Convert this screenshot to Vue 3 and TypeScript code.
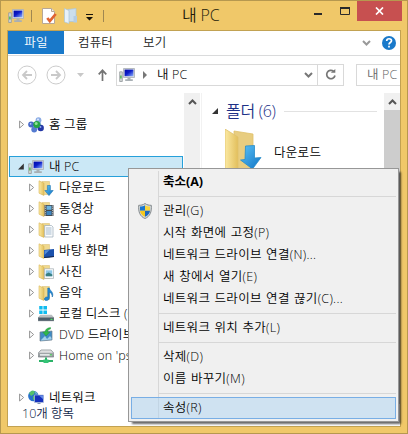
<script setup lang="ts">
interface TreeItem {
  label: string
  icon: string
  level: number
  open?: boolean
  gapAfter?: boolean
}

interface MenuEntry {
  label: string
  bold?: boolean
  shield?: boolean
  active?: boolean
}

const tree: TreeItem[] = [
  { label: '홈 그룹', icon: 'homegroup', level: 0, gapAfter: true },
  { label: '내 PC', icon: 'pc', level: 0, open: true },
  { label: '다운로드', icon: 'download', level: 1 },
  { label: '동영상', icon: 'video', level: 1 },
  { label: '문서', icon: 'document', level: 1 },
  { label: '바탕 화면', icon: 'desktop', level: 1 },
  { label: '사진', icon: 'picture', level: 1 },
  { label: '음악', icon: 'music', level: 1 },
  { label: '로컬 디스크 (C:)', icon: 'disk', level: 1 },
  { label: 'DVD 드라이브 (D:)', icon: 'dvd', level: 1 },
  { label: "Home on 'psf'", icon: 'netdrive', level: 1, gapAfter: true },
  { label: '네트워크', icon: 'network', level: 0 },
]

const menu: MenuEntry[][] = [
  [{ label: '축소(A)', bold: true }],
  [
    { label: '관리(G)', shield: true },
    { label: '시작 화면에 고정(P)' },
    { label: '네트워크 드라이브 연결(N)...' },
    { label: '새 창에서 열기(E)' },
    { label: '네트워크 드라이브 연결 끊기(C)...' },
  ],
  [{ label: '네트워크 위치 추가(L)' }],
  [{ label: '삭제(D)' }, { label: '이름 바꾸기(M)' }],
  [{ label: '속성(R)', active: true }],
]
</script>

<template>
  <div class="window">
    <svg class="defs" width="0" height="0">
      <defs>
        <linearGradient id="screen" x1="0" y1="0" x2="1" y2="1">
          <stop offset="0" stop-color="#0008a8" /><stop offset=".45" stop-color="#0c1cc8" /><stop offset="1" stop-color="#8fb4ff" />
        </linearGradient>
        <linearGradient id="gold" x1="0" y1="0" x2="1" y2="0">
          <stop offset="0" stop-color="#fbe9a2" /><stop offset="1" stop-color="#e2bf5c" />
        </linearGradient>
        <linearGradient id="blue" x1="0" y1="0" x2="1" y2="1">
          <stop offset="0" stop-color="#5cc4f8" /><stop offset="1" stop-color="#0f72c4" />
        </linearGradient>
        <linearGradient id="metal" x1="0" y1="0" x2="0" y2="1">
          <stop offset="0" stop-color="#f4f4f4" /><stop offset="1" stop-color="#8c9296" />
        </linearGradient>
        <symbol id="folder" viewBox="0 0 16 16">
          <path d="M4 1.500h7.500v13H4z" fill="#f0d98e" stroke="#dcc27a" stroke-width=".6" />
          <path d="M1 .8l5 2.400v12.300L1 13.200z" fill="url(#gold)" stroke="#d9b75a" stroke-width=".6" />
        </symbol>
        <symbol id="pc" viewBox="0 0 16 16">
          <path d="M.7 4.800h2.600v9.700H.7z" fill="#d5d8d8" stroke="#92989a" stroke-width=".8" />
          <path d="M1.200 8.500h1.400v3H1.200z" fill="#45b84c" />
          <path d="M4.500 1.500h11v9h-11z" fill="#d9dde0" stroke="#a8afb5" stroke-width=".8" />
          <path d="M5.600 2.600h8.800v6.600H5.600z" fill="url(#screen)" />
          <path d="M8.500 10.800h3v1.500h2.300v1.600H6.200v-1.600h2.300z" fill="#a8afb4" />
        </symbol>
        <symbol id="homegroup" viewBox="0 0 16 16">
          <path d="M4 8L11 4l2 7z" fill="#8fb0e6" stroke="#8fb0e6" stroke-width="2.200" />
          <circle cx="10.500" cy="3.200" r="2.900" fill="#8aabe4" /><circle cx="3.200" cy="7.500" r="3" fill="#4568c8" />
          <circle cx="12.700" cy="11" r="3.200" fill="#2438a6" /><circle cx="6.200" cy="12.500" r="2.900" fill="#557bd0" />
          <circle cx="8.800" cy="7.600" r="3.500" fill="#25a543" /><circle cx="8.200" cy="6.500" r="1.500" fill="#8fe295" />
          <circle cx="10" cy="2.400" r="1" fill="#dbe9ff" /><circle cx="2.600" cy="6.800" r=".9" fill="#c1d4ff" /><circle cx="12.500" cy="10" r=".9" fill="#91a5f0" />
        </symbol>
        <symbol id="download" viewBox="0 0 16 16">
          <use href="#folder" />
          <path d="M9.400 5.500h3v5h2.800L11 15.600 6.800 10.500h2.600z" fill="url(#blue)" stroke="#2075b3" stroke-width=".6" />
        </symbol>
        <symbol id="video" viewBox="0 0 16 16">
          <use href="#folder" />
          <path d="M6.500 4h9v11h-9z" fill="#444b52" /><path d="M8.500 4.800h5v4h-5z" fill="#6ab3df" /><path d="M8.500 10h5v4h-5z" fill="#3f86c1" />
          <path d="M7.400 4.500v10M14.600 4.500v10" stroke="#dce2e5" stroke-width=".8" stroke-dasharray="1.2 1" />
        </symbol>
        <symbol id="document" viewBox="0 0 16 16">
          <use href="#folder" />
          <path d="M6.700 3.500h6.800L15 5v10H6.700z" fill="#fbfcfd" stroke="#9aaab8" stroke-width=".7" />
          <path d="M8 6h5.500M8 8h5.500M8 10h5.500M8 12h5.500" stroke="#8faac2" stroke-width=".8" />
        </symbol>
        <symbol id="desktop" viewBox="0 0 16 16">
          <use href="#folder" />
          <path d="M6 7l10-1v8l-10 1z" fill="#1b51ac" /><path d="M6.500 7.500l5-.5-5 5z" fill="#538bd8" /><path d="M6 14l10-1v1l-10 1z" fill="#17284e" />
        </symbol>
        <symbol id="picture" viewBox="0 0 16 16">
          <use href="#folder" />
          <path d="M6.400 4.800h9.200v9.600H6.400z" fill="#fff" stroke="#9da7ad" stroke-width=".7" />
          <path d="M7.700 6.300h6.600v6H7.700z" fill="#8dc7e8" /><path d="M7.700 10l3-1.400 3.600 1.800v1.900H7.700z" fill="#397f83" />
        </symbol>
        <symbol id="music" viewBox="0 0 16 16">
          <use href="#folder" />
          <path d="M9.800 3h1.500c.2 2.500 5 4 3 9 0-3-1.600-4.500-3-4.800V13c-.3 3-4.600 3.200-4.800 1.200-.2-1.700 1.800-2.600 3.300-2z" fill="#2389d5" stroke="#1769a9" stroke-width=".6" />
        </symbol>
        <symbol id="drive" viewBox="0 0 16 7">
          <path d="M2.500 0h11L16 3v3.500H0V3z" fill="#b9bec1" /><path d="M0 3h16v3.500H0z" fill="#4d5d6b" stroke="#8b9397" stroke-width=".7" />
          <path d="M12.500 4.200h2v1.300h-2z" fill="#52e264" />
        </symbol>
        <symbol id="disk" viewBox="0 0 16 16">
          <path d="M1.200 0h3.400v3.600H1.200zM5.400 0H9v3.600H5.400zM1.200 4.400h3.400V8H1.200zM5.400 4.400H9V8H5.400z" fill="#10bbef" />
          <use href="#drive" x="0" y="8.500" width="16" height="7" />
        </symbol>
        <symbol id="dvd" viewBox="0 0 16 16">
          <path d="M2 5l12-1v9L2 14z" fill="#3f8bc4" stroke="#73818c" stroke-width=".7" />
          <path d="M3 13l4-4 2 3 3-3 1.500 2v1.500L3 13.600z" fill="#a2d1eb" />
          <path d="M12.500.5C9 .8 7.200 2.500 7 5H4.700L8 9l3.800-4H9.500c.1-1.500 1-2.700 3-3z" fill="#31b84a" stroke="#188d38" stroke-width=".4" />
        </symbol>
        <symbol id="netdrive" viewBox="0 0 16 16">
          <path d="M3 2h10l2.700 3v4H.3V5z" fill="url(#metal)" stroke="#777e82" stroke-width=".7" /><path d="M1.500 5.500h13v2.700h-13z" fill="#e2e6e7" stroke="#7d8588" stroke-width=".6" />
          <path d="M11.700 6.200H14v1.300h-2.300z" fill="#42bd50" /><path d="M7 9.500h2V12h6v2H1v-2h6z" fill="#2bb268" /><path d="M5.500 11.500h5V15h-5z" fill="#35c477" />
        </symbol>
        <symbol id="network" viewBox="0 0 16 16">
          <circle cx="5.300" cy="6" r="5.200" fill="#2872cc" /><path d="M1 3l3-2.500 3 .7-1 3L3 6zM5 6l4 .5-2 4-2-1z" fill="#54c16c" /><path d="M7 2l2 1-1 1z" fill="#bdf2c7" />
          <path d="M6.500 5h9v7.500h-9z" fill="#1530bc" stroke="#b2c1d8" stroke-width=".7" /><path d="M11 5.400h4.200v3.800z" fill="#678de8" /><path d="M9.500 13h3v1.200h1.800v1H7.700v-1h1.800z" fill="#8095b4" />
        </symbol>
      </defs>
    </svg>

    <header class="titlebar">
      <div class="quick">
        <svg class="i16" viewBox="0 0 16 16"><use href="#pc" /></svg>
        <i class="tick"></i>
        <svg class="q-doc" width="16" height="16" viewBox="0 0 16 16">
          <path d="M.5.500h9l3 3v12H.5z" fill="#fff" stroke="#b6a796" /><path d="M9.500.500v3h3" fill="#eee" stroke="#b6a796" />
          <path d="M5.300 10l2.500 3.200L13.700 6" fill="none" stroke="#e06432" stroke-width="2.700" />
        </svg>
        <svg class="q-folder" width="14" height="16" viewBox="0 0 14 16">
          <path d="M4 1.500l8-1v13H4z" fill="#cbdeed" stroke="#a9c5db" stroke-width=".7" /><path d="M.5.500L5 2.500v13L.5 14z" fill="#e7f1f9" stroke="#a9c5db" stroke-width=".7" /><path d="M9.500 8H13v6.500H9.500z" fill="#b4cce2" />
        </svg>
        <svg class="q-drop" width="8" height="7" viewBox="0 0 8 7"><path d="M0 0h7v1H0zM0 3h7L3.500 6.500z" fill="#15120a" /></svg>
        <i class="tick"></i>
      </div>
      <h1 class="title">내 PC</h1>
      <div class="controls">
        <svg width="44" height="20" viewBox="0 0 44 20"><path d="M4 13h8" stroke="#2a2a2a" stroke-width="2" /><path d="M30.500 6.500h9v7h-9z" fill="none" stroke="#2a2a2a" /><path d="M30 7h10" stroke="#2a2a2a" stroke-width="2" /></svg>
        <button class="close"><svg width="9" height="8" viewBox="0 0 9 8"><path d="M1 .5l7 7M8 .5l-7 7" stroke="#fff" stroke-width="1.700" /></svg></button>
      </div>
    </header>

    <main class="client">
      <nav class="ribbon">
        <span class="tab file">파일</span>
        <span class="tab computer">컴퓨터</span>
        <span class="tab view">보기</span>
        <svg class="expand" width="9" height="6" viewBox="0 0 9 6"><path d="M1 1l3.500 3.500L8 1" fill="none" stroke="#999" stroke-width="2" /></svg>
        <svg width="14" height="14" viewBox="0 0 14 14"><circle cx="7" cy="7" r="7" fill="#1979ca" /><path d="M4.700 5c0-3 4.800-2.900 4.800-.3C9.500 6.500 7 6.500 7 8.500M7 9.800v1.800" fill="none" stroke="#fff" stroke-width="1.700" /></svg>
      </nav>

      <div class="addressrow">
        <svg class="nav" width="20" height="20" viewBox="0 0 20 20"><circle cx="10" cy="10" r="9" fill="none" stroke="#ccc" /><path d="M15 10H6M10 6l-4 4 4 4" fill="none" stroke="#c9c9c9" stroke-width="1.800" /></svg>
        <svg class="nav" width="20" height="20" viewBox="0 0 20 20"><circle cx="10" cy="10" r="9" fill="none" stroke="#ccc" /><path d="M5 10h9M10 6l4 4-4 4" fill="none" stroke="#c9c9c9" stroke-width="1.800" /></svg>
        <svg class="recent" width="7" height="4" viewBox="0 0 7 4"><path d="M0 0h7L3.500 4z" fill="#c8c8c8" /></svg>
        <svg class="up" width="9" height="12" viewBox="0 0 9 12"><path d="M4.500 12V1.500M.7 5.300l3.800-4 3.800 4" fill="none" stroke="#737373" stroke-width="1.700" /></svg>
        <div class="address">
          <svg class="i16" viewBox="0 0 16 16"><use href="#pc" /></svg>
          <svg class="crumb" width="4" height="8" viewBox="0 0 4 8"><path d="M0 0l4 4-4 4z" fill="#777" /></svg>
          <span class="path">내 PC</span>
          <svg class="chev" width="9" height="6" viewBox="0 0 9 6"><path d="M1 1l3.500 3.500L8 1" fill="none" stroke="#777" stroke-width="2" /></svg>
          <span class="refresh"><svg width="12" height="12" viewBox="0 0 12 12"><path d="M8.500 2.200A4.200 4.200 0 1 0 10 6.500" fill="none" stroke="#777" stroke-width="1.700" /><path d="M5.800 3.800h4.500V0z" fill="#777" /></svg></span>
        </div>
        <div class="search">내 PC</div>
      </div>

      <div class="body">
        <aside class="tree">
          <div v-for="item in tree" :key="item.label" class="row" :class="{ child: item.level, selected: item.open, spaced: item.gapAfter }">
            <svg v-if="item.open" class="arrow" width="6" height="9" viewBox="0 0 6 9"><path d="M5.800 1.500v6H0z" fill="#333" /></svg>
            <svg v-else class="arrow" width="6" height="9" viewBox="0 0 6 9"><path d="M.6 1l4 3.500-4 3.500z" fill="#fff" stroke="#949494" /></svg>
            <svg class="i16" viewBox="0 0 16 16"><use :href="'#' + item.icon" /></svg>
            <span class="label">{{ item.label }}</span>
          </div>
        </aside>
        <div class="scroll"><svg width="9" height="6" viewBox="0 0 9 6"><path d="M1 5l3.500-3.500L8 5" fill="none" stroke="#555" stroke-width="2" /></svg></div>
        <section class="content">
          <div class="group">
            <svg width="6" height="6" viewBox="0 0 6 6"><path d="M6 0v6H0z" fill="#333" /></svg>
            <h2>폴더 (6)</h2><hr />
          </div>
          <div class="tile">
            <svg width="40" height="48" viewBox="0 0 40 48">
              <path d="M9 2l19 3v40H9z" fill="#e8cd80" stroke="#e0c069" stroke-width=".8" />
              <path d="M0 0l13 8v40L0 41z" fill="url(#gold)" stroke="#dfc16d" stroke-width=".8" />
              <path d="M20.500 17l9-.5v12.500l6.500-.5L27.500 40 15.500 31l4.500-.5z" fill="url(#blue)" stroke="#268bc9" stroke-width=".8" />
            </svg>
            <span>다운로드</span>
          </div>
        </section>
        <div class="scroll"><svg width="9" height="6" viewBox="0 0 9 6"><path d="M1 5l3.500-3.500L8 5" fill="none" stroke="#555" stroke-width="2" /></svg><i class="thumb"></i></div>
      </div>
      <footer class="status">10개 항목</footer>
    </main>

    <div class="menu">
      <div v-for="(group, g) in menu" :key="g" class="section">
        <div v-for="entry in group" :key="entry.label" class="entry" :class="{ bold: entry.bold, active: entry.active }">
          <span class="gutter">
            <svg v-if="entry.shield" width="14" height="16" viewBox="0 0 14 16">
              <path d="M7 .5c2 1.500 4 1.800 6.300 1.800C13.800 9 12 13.500 7 15.500 2 13.500.2 9 .7 2.300 3 2.300 5 2 7 .5z" fill="#d4d9db" stroke="#858b8e" />
              <path d="M7 2.200v5.600H2V3.600C4 3.600 5.500 3.200 7 2.200z" fill="#1976cf" /><path d="M7 2.200v5.600h5V3.600C10 3.600 8.500 3.200 7 2.200z" fill="#f9d53d" />
              <path d="M7 7.800v6C4 12.500 2.300 10.500 2 7.800z" fill="#f5c81e" /><path d="M7 7.800v6c3-1.300 4.700-3.300 5-6z" fill="#1b68bf" />
            </svg>
          </span>
          <span>{{ entry.label }}</span>
        </div>
      </div>
    </div>
  </div>
</template>

<style>
body { margin: 0; overflow: hidden; }
</style>

<style scoped>
* { box-sizing: border-box; }
.window { position: relative; width: 408px; height: 434px; padding: 0 6px 6px; border: 1px solid #b6984f; background: #f0c869; font: 350 12.500px/20px "Open Sans", "Noto Sans CJK KR", sans-serif; color: #000; white-space: nowrap; letter-spacing: .15px; }
.defs { position: absolute; }
svg { display: block; flex: none; }
.i16 { width: 16px; height: 16px; }
.titlebar { display: flex; height: 29px; margin-right: -1px; }
.quick { display: flex; align-items: center; width: 175px; padding-left: 1px; }
.tick { width: 1px; height: 12px; margin-left: 7px; background: #a08751; }
.q-doc { margin-left: 10px; }
.q-folder { margin-left: 6px; }
.q-drop { margin: 4px 0 0 8px; }
.q-drop + .tick { margin-left: 9px; }
.title { flex: 1; margin: 0; font-size: 16px; font-weight: 350; line-height: 29px; color: #241c0b; letter-spacing: -.2px; }
.controls { display: flex; }
.controls > svg { margin-right: 3px; }
.close { display: grid; place-items: center; width: 45px; height: 20px; padding: 0; border: 0; background: #c75050; }
.client { height: 397px; border: 1px solid #c2a252; background: #fff; overflow: hidden; }
.ribbon { display: flex; align-items: center; height: 25px; padding-right: 4px; border-bottom: 1px solid #dadbdc; color: #222; line-height: 23px; }
.tab { height: 23px; margin-bottom: 1px; }
.file { width: 56px; text-align: center; background: #1979ca; color: #fff; }
.computer { width: 79px; padding-left: 14px; }
.view { flex: 1; }
.expand { margin-right: 11px; }
.addressrow { display: flex; align-items: center; height: 37px; padding-left: 9px; }
.nav { margin-right: 9px; }
.recent { margin-left: 2px; }
.up { margin: 0 8px 0 14px; }
.address { display: flex; align-items: center; width: 228px; height: 22px; padding-left: 2px; margin-left: 1px; border: 1px solid #d9d9d9; }
.crumb { margin: 0 10px 0 8px; }
.path { flex: 1; }
.chev { margin-right: 4px; }
.refresh { display: grid; place-items: center; width: 26px; height: 20px; border-left: 1px solid #d9d9d9; }
.search { flex: 1; height: 22px; margin-left: 12px; padding-left: 10px; border: 1px solid #d9d9d9; border-right: 0; color: #666; }
.body { display: flex; height: 311px; }
.tree { width: 176px; padding: 21px 1px 0; overflow: hidden; }
.row { display: flex; align-items: center; height: 21px; padding-left: 10px; border: 1px solid transparent; border-left: 0; }
.row.spaced { margin-bottom: 21px; }
.row.child { padding-left: 20px; }
.row.selected { padding-left: 8px; border: 1px solid #26a0da; background: #cbe8f6; }
.row .arrow { margin-right: 3px; }
.row.selected .arrow { margin-right: 4px; }
.label { margin-left: 5px; }
.scroll { display: flex; flex-direction: column; align-items: center; width: 16px; padding-top: 6px; background: #f0f0f0; }
.content { width: 183px; padding: 10px 7px 0 10px; border-left: 1px solid #f2f2f2; margin-left: 1px; }
.group { display: flex; align-items: center; height: 16px; }
.group h2 { width: 58px; margin: 0 0 0 8px; font-size: 16px; font-weight: 350; letter-spacing: -.3px; color: #1e3287; }
.group hr { flex: 1; height: 1px; margin: 0; border: 0; background: #e2e2e2; }
.tile { display: flex; margin-top: 10px; padding-left: 13px; }
.tile span { margin: 14px 0 0 9px; letter-spacing: .3px; }
.thumb { flex: 1; width: 100%; margin-top: 5px; background: #cdcdcd; }
.status { height: 19px; padding-left: 14px; line-height: 20px; color: #10264a; letter-spacing: 0; }
.menu { position: absolute; left: 127px; top: 167px; width: 271px; height: 254px; padding: 2px; border: 1px solid #979797; background: linear-gradient(90deg, transparent 29px, #d7d7d7 29px 30px, transparent 30px) 0 2px / 100% 248px no-repeat #f0f0f0; box-shadow: 3px 3px 2px -1px rgba(0, 0, 0, .6); letter-spacing: .3px; word-spacing: .8px; }
.section + .section { position: relative; margin-top: 3px; padding-top: 4px; }
.section + .section::before { content: ""; position: absolute; top: 0; left: 27px; right: 0; height: 1px; background: #d7d7d7; }
.entry { display: flex; align-items: center; height: 22px; border: 1px solid transparent; }
.gutter { display: flex; justify-content: center; width: 31px; padding-right: 6px; }
.bold { font-weight: 700; letter-spacing: 0; }
.active { border-color: #78aee5; background: rgba(174, 211, 242, .5); }
</style>
